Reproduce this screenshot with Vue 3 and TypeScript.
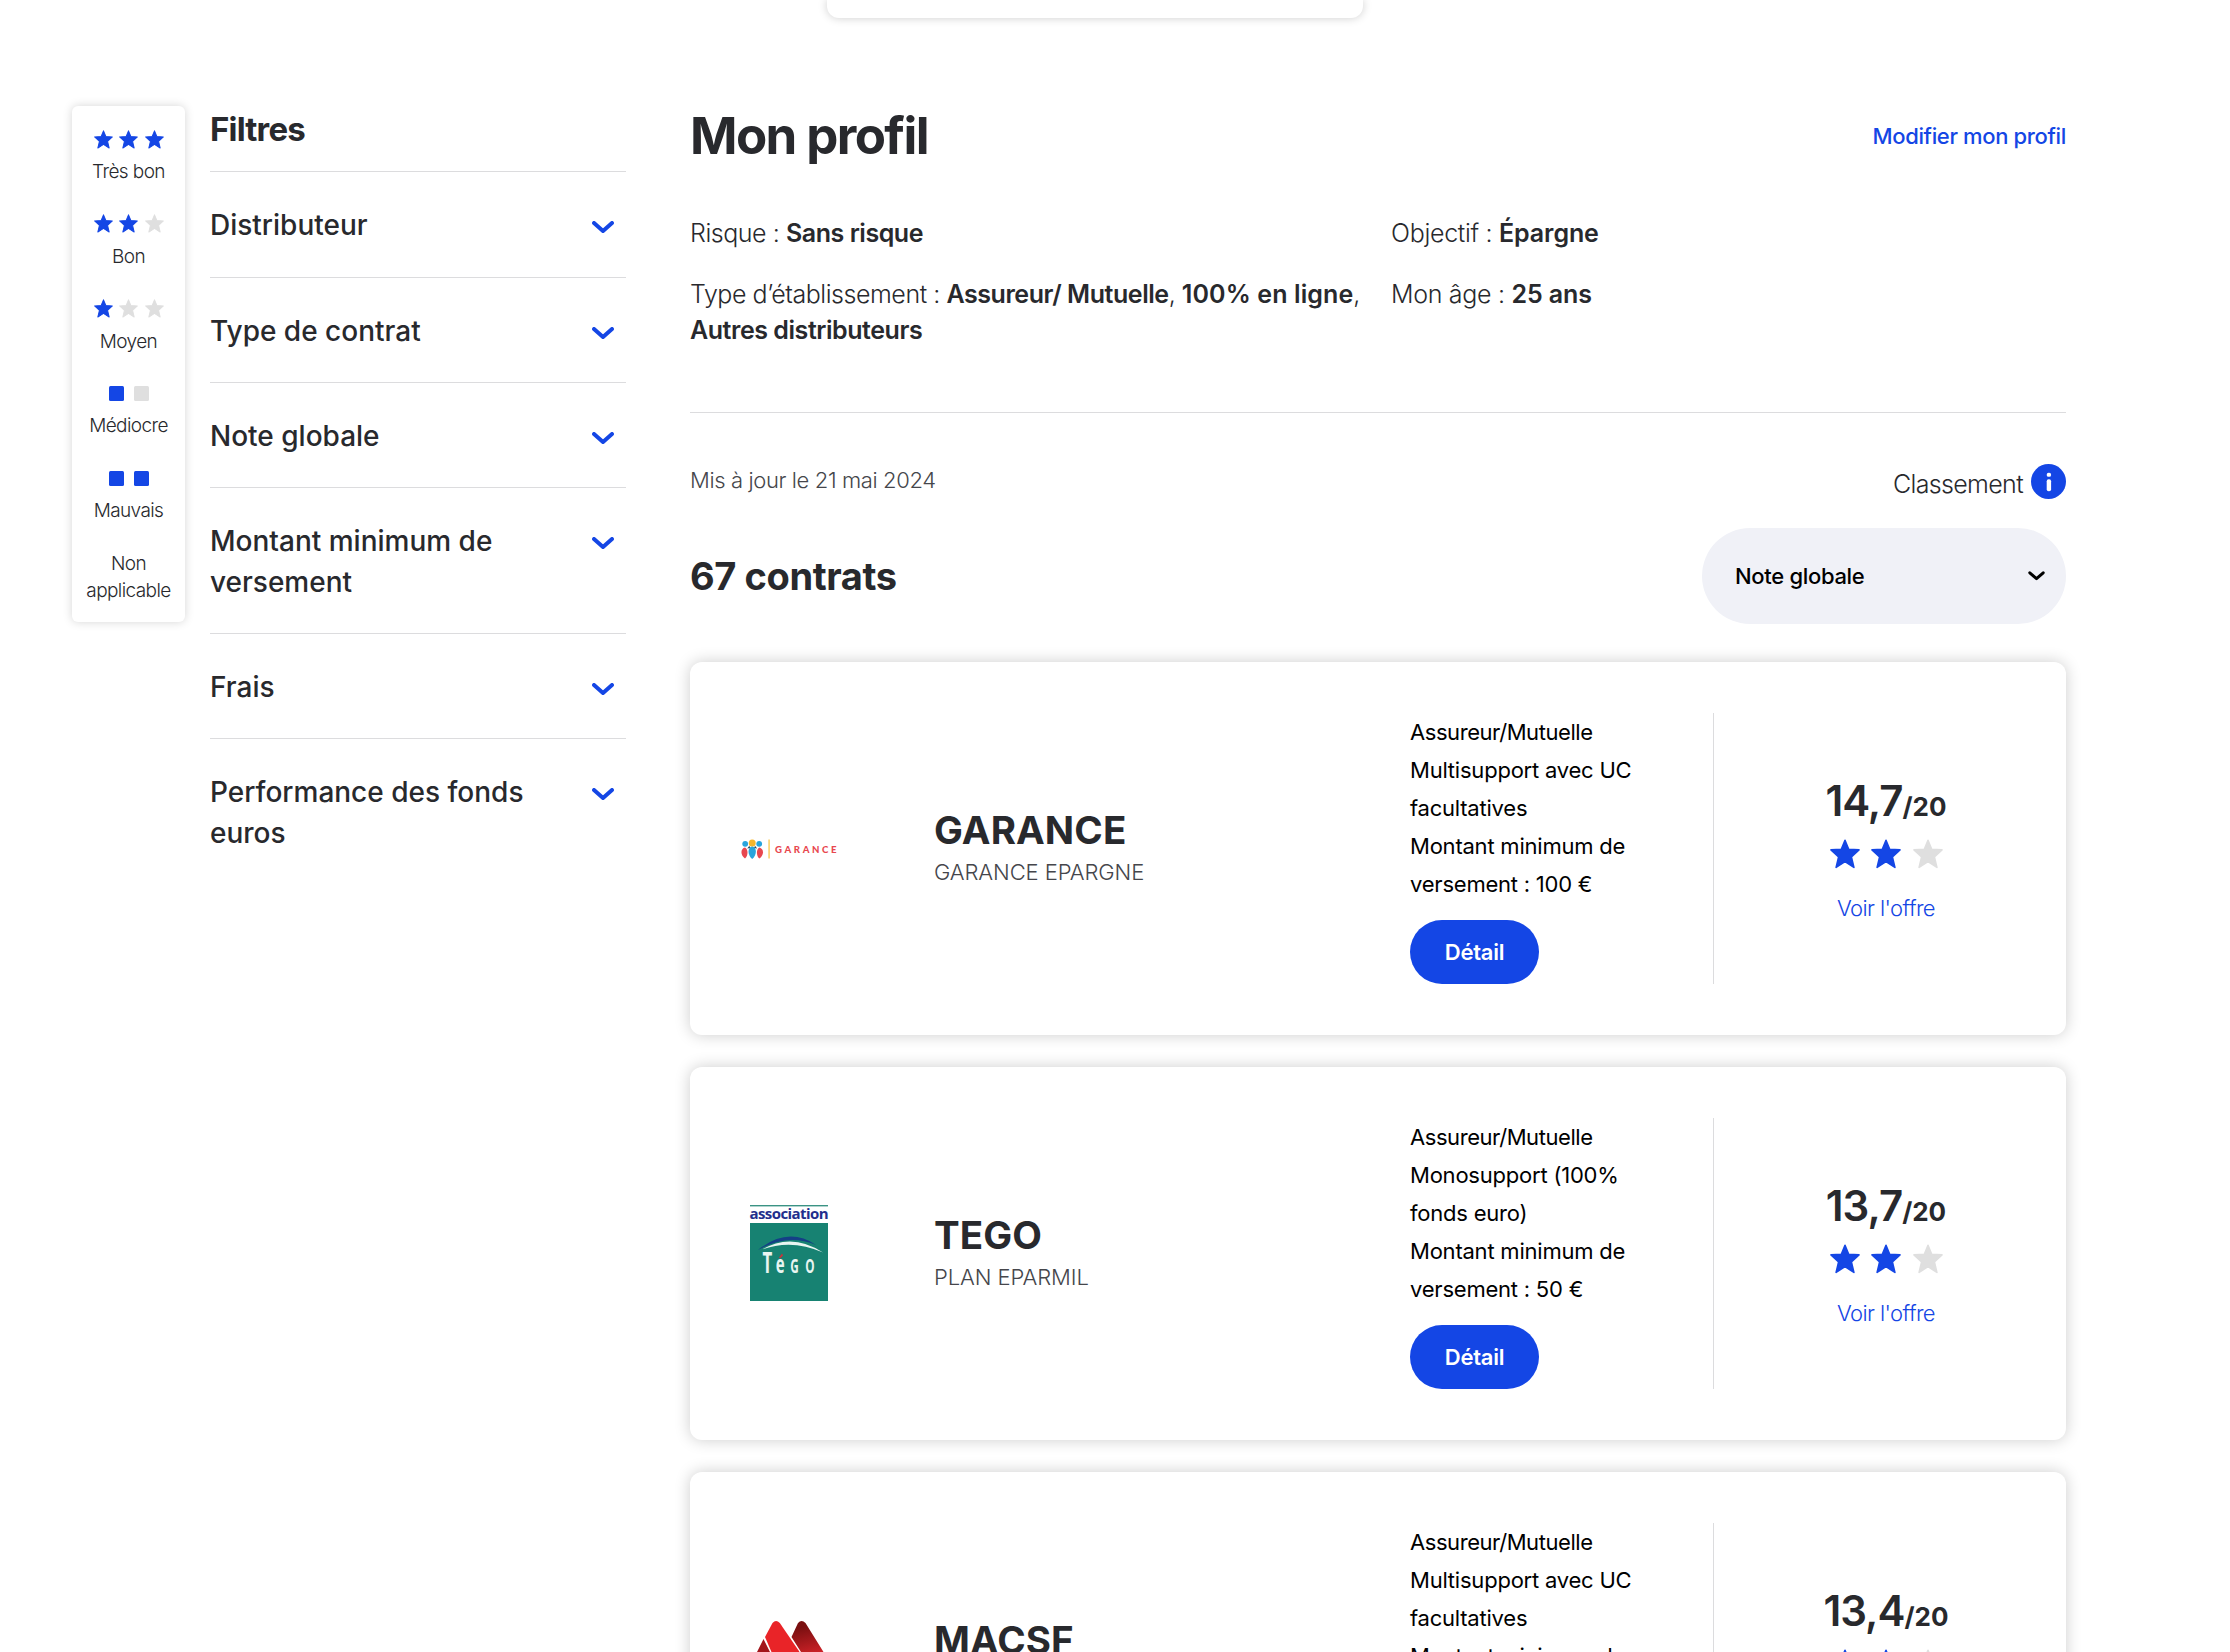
<script setup lang="ts">
type Mark = 'on' | 'off'

interface LegendEntry {
  label: string
  shape: 'star' | 'square' | 'none'
  marks: Mark[]
}

interface Contract {
  logo: 'garance' | 'tego' | 'macsf'
  name: string
  product: string
  details: string[]
  score: string
  stars: Mark[]
}

const legend: LegendEntry[] = [
  { label: 'Très bon', shape: 'star', marks: ['on', 'on', 'on'] },
  { label: 'Bon', shape: 'star', marks: ['on', 'on', 'off'] },
  { label: 'Moyen', shape: 'star', marks: ['on', 'off', 'off'] },
  { label: 'Médiocre', shape: 'square', marks: ['on', 'off'] },
  { label: 'Mauvais', shape: 'square', marks: ['on', 'on'] },
  { label: 'Non applicable', shape: 'none', marks: [] },
]

const filters: string[] = [
  'Distributeur',
  'Type de contrat',
  'Note globale',
  'Montant minimum de versement',
  'Frais',
  'Performance des fonds euros',
]

const contracts: Contract[] = [
  {
    logo: 'garance',
    name: 'GARANCE',
    product: 'GARANCE EPARGNE',
    details: ['Assureur/Mutuelle', 'Multisupport avec UC facultatives', 'Montant minimum de versement : 100 €'],
    score: '14,7',
    stars: ['on', 'on', 'off'],
  },
  {
    logo: 'tego',
    name: 'TEGO',
    product: 'PLAN EPARMIL',
    details: ['Assureur/Mutuelle', 'Monosupport (100% fonds euro)', 'Montant minimum de versement : 50 €'],
    score: '13,7',
    stars: ['on', 'on', 'off'],
  },
  {
    logo: 'macsf',
    name: 'MACSF',
    product: '',
    details: ['Assureur/Mutuelle', 'Multisupport avec UC facultatives', 'Montant minimum de'],
    score: '13,4',
    stars: ['on', 'on', 'off'],
  },
]

const starPath =
  'M15 1.3 L18.7 10.3 L29 10.9 L21.4 17.9 L23.9 28.4 L15 22.7 L6.1 28.4 L8.6 17.9 L1 10.9 L11.3 10.3 Z'
</script>

<template>
  <div class="page">
    <div class="upper-card"></div>

    <div class="layout">
      <aside class="legend">
        <div v-for="entry in legend" :key="entry.label" class="legend-item" :class="'is-' + entry.shape">
          <div v-if="entry.shape === 'star'" class="marks">
            <svg v-for="(m, i) in entry.marks" :key="i" class="star" :class="m" viewBox="0 0 30 30">
              <path :d="starPath" />
            </svg>
          </div>
          <div v-else-if="entry.shape === 'square'" class="marks squares">
            <span v-for="(m, i) in entry.marks" :key="i" class="square" :class="m"></span>
          </div>
          <span class="legend-label">{{ entry.label }}</span>
        </div>
      </aside>

      <nav class="filters">
        <h2 class="filters-title">Filtres</h2>
        <div v-for="name in filters" :key="name" class="filter">
          <span class="filter-name">{{ name }}</span>
          <svg class="chevron" viewBox="0 0 22 13"><path d="M2 2 L11 10 L20 2" /></svg>
        </div>
      </nav>

      <main class="main">
        <header class="profile-head">
          <h1 class="profile-title">Mon profil</h1>
          <a class="profile-link">Modifier mon profil</a>
        </header>

        <div class="facts">
          <p>Risque : <b>Sans risque</b></p>
          <p class="loose">Objectif : <b>Épargne</b></p>
          <p>
            Type d’établissement : <b>Assureur/ Mutuelle</b>, <b class="online">100% en ligne</b>,
            <b>Autres distributeurs</b>
          </p>
          <p class="loose">Mon âge : <b>25 ans</b></p>
        </div>

        <div class="toolbar">
          <div>
            <p class="updated">Mis à jour le 21 mai 2024</p>
            <h2 class="count">67 contrats</h2>
          </div>
          <div class="sorting">
            <div class="ranking">
              <span class="ranking-label">Classement</span>
              <svg class="info" viewBox="0 0 35 35">
                <circle cx="17.5" cy="17.5" r="17.5" />
                <rect x="15.7" y="8.8" width="4.4" height="4" rx="1.9" />
                <rect x="15.7" y="15.2" width="4.4" height="12" rx="2" />
              </svg>
            </div>
            <div class="select">
              <span class="select-value">Note globale</span>
              <svg class="select-arrow" viewBox="0 0 17 10"><path d="M1.8 1.8 L8.5 7.6 L15.2 1.8" /></svg>
            </div>
          </div>
        </div>

        <section class="list">
          <article v-for="c in contracts" :key="c.name" class="card">
            <div class="logo">
              <svg v-if="c.logo === 'garance'" class="garance" width="96" height="22" viewBox="0 0 96 22">
                <g fill="#29a4dc">
                  <circle cx="4.2" cy="4.8" r="2.9" />
                  <circle cx="18.2" cy="4.8" r="2.9" />
                  <path d="M11.2 20 C6.4 16 6.2 8.6 11.2 7.2 C16.2 8.6 16 16 11.2 20 Z" />
                </g>
                <circle cx="11.2" cy="3.9" r="3.5" fill="#f8b62b" />
                <g fill="#e8474f">
                  <path d="M4 19.6 C-.9 16 -.6 9.6 4 8.6 C7 9.8 7.6 16.6 4 19.6 Z" />
                  <path d="M18.4 19.6 C14.8 16.6 15.4 9.8 18.4 8.6 C23 9.6 23.3 16 18.4 19.6 Z" />
                </g>
                <path d="M6.2 9.4 L8.4 6.8 L9.2 9 Z M16.2 9.4 L14 6.8 L13.2 9 Z" fill="#2c4a5c" />
                <rect x="27.2" y="0.5" width="1.8" height="19" fill="#fbd67c" />
                <text x="34" y="13.6" class="garance-name" textLength="61.5">GARANCE</text>
              </svg>
              <svg v-else-if="c.logo === 'tego'" width="78" height="96" viewBox="0 0 78 96">
                <rect width="78" height="1.4" fill="#3b9384" />
                <text x="-0.5" y="14.4" class="tego-top" textLength="79">association</text>
                <rect y="18" width="78" height="78" fill="#178272" />
                <path d="M8 45 Q38 21 66 40 Q38 28 8 45 Z" fill="#143f86" />
                <path d="M12 44.5 Q42 27 73 47.5 Q42 33.5 12 44.5 Z" fill="#e8f5f1" />
                <text y="68.5" class="tego-name" transform="scale(0.6 1)">
                  <tspan x="21" font-size="28">T</tspan><tspan x="43" font-size="25">e</tspan
                  ><tspan x="67" font-size="19.5">G</tspan><tspan x="92" font-size="19.5">O</tspan>
                </text>
                <path d="M29 52.5 L32 48.5 L33 50.5 L30 53.4 Z" fill="#cf3038" />
              </svg>
              <svg v-else width="96" height="96" viewBox="0 0 96 96">
                <defs>
                  <linearGradient id="leg" gradientUnits="userSpaceOnUse" x1="60" y1="14" x2="68" y2="46">
                    <stop offset="0.1" stop-color="#7a0f10" />
                    <stop offset="1" stop-color="#cf2228" />
                  </linearGradient>
                </defs>
                <path d="M22.500 29 L29 42 L47 82 L-5 82 L16 42 Z" fill="#a3161b" />
                <path d="M50.500 27 L57 13 Q60.500 9 64.500 13 L82.500 42 L107 82 L85 82 L60 42 Z" fill="url(#leg)" />
                <path d="M24 27 L31.500 13 Q35 9 38.800 13 L58.600 42 L84 82 L49 82 L30.500 42 Z" fill="#e92428" />
              </svg>
            </div>
            <div class="identity">
              <h3 class="name">{{ c.name }}</h3>
              <p class="product">{{ c.product }}</p>
            </div>
            <div class="details">
              <p v-for="d in c.details" :key="d" class="detail">{{ d }}</p>
              <button class="detail-btn" type="button">Détail</button>
            </div>
            <div class="rating">
              <div class="score">{{ c.score }}<small>/20</small></div>
              <div class="rating-stars">
                <svg v-for="(m, i) in c.stars" :key="i" class="star" :class="m" viewBox="0 0 30 30">
                  <path :d="starPath" />
                </svg>
              </div>
              <a class="offer">Voir l'offre</a>
            </div>
          </article>
        </section>
      </main>
    </div>
  </div>
</template>

<style>
body {
  background: #fff;
}
</style>

<style scoped>
.page {
  width: 2230px;
  height: 1652px;
  overflow: hidden;
  background: #fff;
  color: #28292d;
  font-family: Inter, 'Liberation Sans', sans-serif;
}
h1,
h2,
h3,
p {
  margin: 0;
}
.upper-card {
  width: 536px;
  height: 18px;
  margin-left: 827px;
  border-radius: 0 0 12px 12px;
  box-shadow: 0 0 10px rgba(0, 0, 0, 0.2);
}
.layout {
  display: flex;
  align-items: flex-start;
  padding: 88px 0 0 72px;
}

/* Légende des notes */
.legend {
  box-sizing: border-box;
  width: 113px;
  height: 516px;
  padding-top: 24px;
  border-radius: 6px;
  box-shadow: 0 0 10px rgba(0, 0, 0, 0.17);
  display: flex;
  flex-direction: column;
  gap: 29.8px;
}
.legend-item {
  display: flex;
  flex-direction: column;
  align-items: center;
  gap: 10px;
  text-align: center;
}
.legend-item.is-none {
  margin-top: -3.8px;
}
.marks {
  display: flex;
  align-items: center;
  gap: 6.5px;
  height: 18px;
}
.marks.squares {
  gap: 10px;
}
.marks .star {
  width: 19px;
  height: 19px;
}
.star path {
  stroke-width: 1.6;
  stroke-linejoin: round;
}
.star.on path {
  fill: #1446e5;
  stroke: #1446e5;
}
.star.off path {
  fill: #dfdfdf;
  stroke: #dfdfdf;
}
.square {
  width: 15px;
  height: 15px;
  border-radius: 1.5px;
}
.square.on {
  background: #1446e5;
}
.square.off {
  background: #dfdfdf;
}
.legend-label {
  width: 94px;
  font-size: 19px;
  line-height: 27px;
  font-weight: 350;
  letter-spacing: -0.6px;
}

/* Filtres */
.filters {
  width: 416px;
  margin-left: 25px;
}
.filters-title {
  padding: 3.2px 0 22.25px;
  font-size: 33px;
  line-height: 40px;
  font-weight: 700;
  letter-spacing: -0.8px;
}
.filter {
  display: flex;
  justify-content: space-between;
  align-items: flex-start;
  padding: 33px 12px 31px 0;
  border-top: 1px solid #dcdcde;
}
.filter-name {
  width: 330px;
  font-size: 28px;
  line-height: 40.3px;
  font-weight: 550;
  letter-spacing: 0;
}
.chevron {
  width: 22px;
  height: 13px;
  margin-top: 16px;
}
.chevron path {
  fill: none;
  stroke: #1446e5;
  stroke-width: 4;
  stroke-linecap: round;
  stroke-linejoin: round;
}

/* Profil */
.main {
  width: 1376px;
  margin-left: 64px;
}
.profile-head {
  display: flex;
  justify-content: space-between;
  align-items: center;
  height: 60px;
}
.profile-title {
  font-size: 51px;
  line-height: 60px;
  font-weight: 700;
  letter-spacing: -1.6px;
}
.profile-link {
  color: #1446e5;
  font-size: 22px;
  line-height: 30px;
  font-weight: 450;
  letter-spacing: -0.35px;
}
.facts {
  display: grid;
  grid-template-columns: 701px 1fr;
  row-gap: 24.6px;
  padding: 49.4px 0 63.6px;
  border-bottom: 1px solid #dcdcde;
  font-size: 25px;
  line-height: 36px;
  font-weight: 300;
  letter-spacing: -0.45px;
}
.facts b {
  font-weight: 600;
}
.facts .online {
  letter-spacing: 0.1px;
}
.facts .loose {
  letter-spacing: -0.3px;
}
.facts .loose b {
  letter-spacing: -0.1px;
}

/* Barre de tri */
.toolbar {
  display: flex;
  justify-content: space-between;
  padding-top: 51px;
}
.updated {
  margin-top: 1.4px;
  color: #45464b;
  font-size: 22px;
  line-height: 30px;
  font-weight: 300;
  letter-spacing: -0.38px;
}
.count {
  margin-top: 58px;
  font-size: 38px;
  line-height: 46px;
  font-weight: 700;
  letter-spacing: -0.4px;
}
.sorting {
  width: 364px;
}
.ranking {
  display: flex;
  justify-content: flex-end;
  gap: 8px;
  height: 35px;
}
.ranking-label {
  margin-top: 5px;
  font-size: 25px;
  line-height: 30px;
  font-weight: 300;
  letter-spacing: -0.65px;
}
.info {
  width: 35px;
  height: 35px;
}
.info circle {
  fill: #1446e5;
}
.info rect {
  fill: #fff;
}
.select {
  box-sizing: border-box;
  display: flex;
  justify-content: space-between;
  align-items: center;
  height: 96px;
  margin-top: 29px;
  padding: 0 21px 0 33px;
  border-radius: 48px;
  background: #f0f1f7;
}
.select-value {
  color: #000;
  font-size: 22px;
  line-height: 30px;
  font-weight: 450;
  letter-spacing: -0.32px;
}
.select-arrow {
  width: 17px;
  height: 10px;
}
.select-arrow path {
  fill: none;
  stroke: #000;
  stroke-width: 3;
  stroke-linecap: round;
  stroke-linejoin: round;
}

/* Contrats */
.list {
  display: flex;
  flex-direction: column;
  gap: 32px;
  margin-top: 38px;
}
.card {
  box-sizing: border-box;
  display: grid;
  grid-template-columns: 193px 476px 303px 1fr;
  height: 373px;
  padding: 51px 0 51px 51px;
  border-radius: 12px;
  background: #fff;
  box-shadow: 0 0 16px rgba(0, 0, 0, 0.2);
}
.logo {
  display: flex;
  justify-content: center;
  align-items: center;
  width: 96px;
  height: 271px;
}
.logo svg {
  overflow: visible;
}
.logo .garance {
  margin-top: 4px;
}
.garance-name {
  fill: #e8474f;
  font-family: Lato, sans-serif;
  font-size: 9.6px;
  font-weight: 900;
}
.tego-top {
  fill: #222e8c;
  font-family: 'Open Sans', sans-serif;
  font-size: 15px;
  font-weight: 700;
}
.tego-name {
  fill: #e8f5f1;
  font-family: 'Open Sans', sans-serif;
  font-weight: 700;
}
.identity {
  align-self: center;
  padding-bottom: 2px;
}
.name {
  font-size: 38.5px;
  line-height: 46px;
  font-weight: 700;
  letter-spacing: 0.1px;
}
.product {
  min-height: 30px;
  margin-top: 4.8px;
  color: #45464b;
  font-size: 22px;
  line-height: 30px;
  font-weight: 300;
  letter-spacing: -0.1px;
}
.detail {
  width: 250px;
  color: #000;
  font-size: 22px;
  line-height: 38.2px;
  font-weight: 400;
  letter-spacing: -0.22px;
}
.detail:first-child {
  letter-spacing: -0.44px;
}
.detail-btn {
  display: block;
  width: 129px;
  height: 64px;
  margin-top: 16px;
  padding: 0;
  border: 0;
  border-radius: 32px;
  background: #1446e5;
  color: #fff;
  font: 600 22px/30px Inter, 'Liberation Sans', sans-serif;
  letter-spacing: -0.25px;
}
.rating {
  display: flex;
  flex-direction: column;
  align-items: center;
  justify-content: center;
  padding: 3px 8px 0 0;
  border-left: 1px solid #dcdcde;
}
.score {
  font-size: 42px;
  line-height: 50px;
  font-weight: 600;
  letter-spacing: -1px;
}
.score small {
  font-size: 26px;
  line-height: 1;
  font-weight: 700;
  letter-spacing: 0;
}
.rating-stars {
  display: flex;
  gap: 11.5px;
  margin-top: 13px;
}
.rating-stars .star {
  width: 30px;
  height: 30px;
}
.offer {
  margin-top: 23.3px;
  color: #1446e5;
  font-size: 22px;
  line-height: 30px;
  font-weight: 300;
  letter-spacing: -0.6px;
}
</style>
